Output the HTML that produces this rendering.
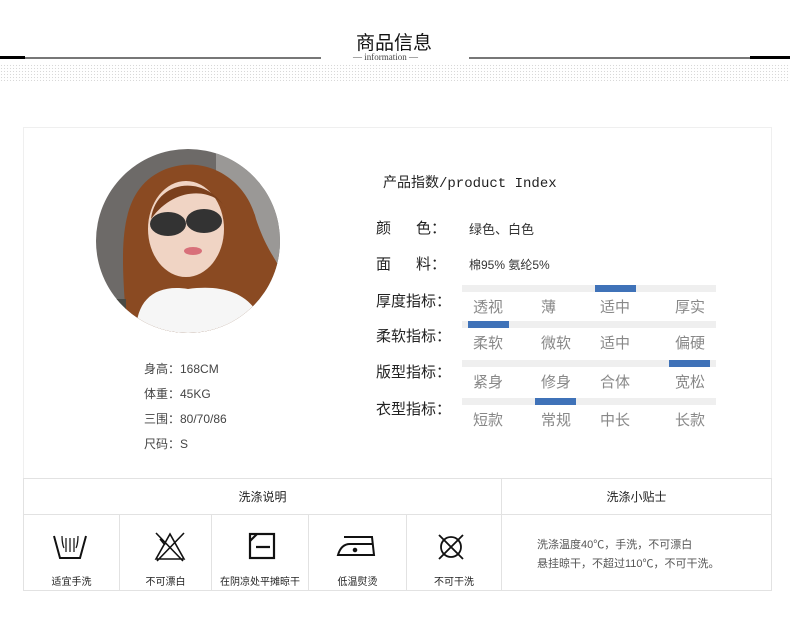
<!DOCTYPE html>
<html><head><meta charset="utf-8"><style>
*{margin:0;padding:0;box-sizing:border-box}
body{width:790px;height:631px;background:#fff;position:relative;overflow:hidden;font-family:"Liberation Sans","Noto Sans CJK SC",sans-serif;color:#333}
.a{position:absolute;white-space:nowrap}
.dots{position:absolute;left:0;top:64px;width:790px;height:17px;background-image:radial-gradient(#d8d8d8 0.6px,transparent 0.8px);background-size:3px 3px}
.track{position:absolute;left:462px;width:254px;height:7px;background:#efefef}
.blue{position:absolute;width:41px;height:7px;background:#3f72b8}
.lab{position:absolute;font-size:15px;color:#888}
.k{position:absolute;font-size:15px;color:#222;left:376px}
.cell{position:absolute;border:1px solid #e2e2e2}
.ic{position:absolute;font-size:10px;color:#222;text-align:center}
</style></head><body>
<div class="a" style="left:356px;top:28px;font-size:19px;color:#111">商品信息</div>
<div class="a" style="left:353px;top:52px;font-size:9px;color:#444;font-family:'Liberation Serif',serif">— information —</div>
<div class="a" style="left:0;top:56px;width:25px;height:3px;background:#000"></div>
<div class="a" style="left:25px;top:57px;width:296px;height:2px;background:#777"></div>
<div class="a" style="left:469px;top:57px;width:281px;height:2px;background:#777"></div>
<div class="a" style="left:750px;top:56px;width:40px;height:3px;background:#000"></div>
<div class="dots"></div>

<div class="a" style="left:23px;top:127px;width:749px;height:352px;border:1px solid #efefef"></div>

<svg class="a" style="left:96px;top:149px" width="184" height="184" viewBox="0 0 184 184">
<defs><clipPath id="c"><circle cx="92" cy="92" r="92"/></clipPath></defs>
<g clip-path="url(#c)">
<rect width="184" height="184" fill="#6d6a68"/>
<rect x="120" y="0" width="64" height="120" fill="#9a9896"/>
<path d="M30 170 C25 100 20 40 70 20 C110 5 150 30 160 70 C170 100 180 110 184 120 L184 184 L30 184Z" fill="#8a4a22"/>
<ellipse cx="90" cy="80" rx="38" ry="48" fill="#f0d4c4"/>
<path d="M55 70 C60 30 110 25 130 60 C120 40 80 35 55 70Z" fill="#7a3f1c"/>
<ellipse cx="72" cy="75" rx="18" ry="12" fill="#333"/>
<ellipse cx="108" cy="72" rx="18" ry="12" fill="#333"/>
<ellipse cx="97" cy="102" rx="9" ry="4" fill="#d8707a"/>
<path d="M40 184 C40 150 60 135 92 140 C130 135 160 145 170 184Z" fill="#f6f6f6"/>
<rect x="0" y="150" width="30" height="34" fill="#4a4a44"/>
</g></svg>

<div class="a" style="left:144px;top:357px;font-size:12px;color:#444;line-height:25px">身高：168CM<br>体重：45KG<br>三围：80/70/86<br>尺码：S</div>

<div class="a" style="left:383px;top:172px;font-size:14px;color:#222;font-family:'Liberation Mono','Noto Sans CJK SC',monospace">产品指数/product Index</div>
<div class="k" style="top:217px">颜&nbsp;&nbsp;&nbsp;&nbsp;&nbsp;&nbsp;色：</div>
<div class="a" style="left:469px;top:219px;font-size:13px;color:#333">绿色、白色</div>
<div class="k" style="top:253px">面&nbsp;&nbsp;&nbsp;&nbsp;&nbsp;&nbsp;料：</div>
<div class="a" style="left:469px;top:256px;font-size:12px;color:#333">棉95% 氨纶5%</div>

<div class="k" style="top:290px">厚度指标：</div>
<div class="track" style="top:285px"></div><div class="blue" style="left:595px;top:285px"></div>
<div class="lab" style="left:473px;top:296px">透视</div><div class="lab" style="left:541px;top:296px">薄</div><div class="lab" style="left:600px;top:296px">适中</div><div class="lab" style="left:675px;top:296px">厚实</div>

<div class="k" style="top:325px">柔软指标：</div>
<div class="track" style="top:321px"></div><div class="blue" style="left:468px;top:321px"></div>
<div class="lab" style="left:473px;top:332px">柔软</div><div class="lab" style="left:541px;top:332px">微软</div><div class="lab" style="left:600px;top:332px">适中</div><div class="lab" style="left:675px;top:332px">偏硬</div>

<div class="k" style="top:361px">版型指标：</div>
<div class="track" style="top:360px"></div><div class="blue" style="left:669px;top:360px"></div>
<div class="lab" style="left:473px;top:371px">紧身</div><div class="lab" style="left:541px;top:371px">修身</div><div class="lab" style="left:600px;top:371px">合体</div><div class="lab" style="left:675px;top:371px">宽松</div>

<div class="k" style="top:398px">衣型指标：</div>
<div class="track" style="top:398px"></div><div class="blue" style="left:535px;top:398px"></div>
<div class="lab" style="left:473px;top:409px">短款</div><div class="lab" style="left:541px;top:409px">常规</div><div class="lab" style="left:600px;top:409px">中长</div><div class="lab" style="left:675px;top:409px">长款</div>

<div class="cell" style="left:23px;top:478px;width:479px;height:37px"></div>
<div class="cell" style="left:501px;top:478px;width:271px;height:37px"></div>
<div class="a" style="left:23px;top:488px;width:479px;text-align:center;font-size:12px;color:#222">洗涤说明</div>
<div class="a" style="left:501px;top:488px;width:271px;text-align:center;font-size:12px;color:#222">洗涤小贴士</div>
<div class="cell" style="left:23px;top:514px;width:97px;height:77px"></div>
<div class="cell" style="left:119px;top:514px;width:93px;height:77px"></div>
<div class="cell" style="left:211px;top:514px;width:98px;height:77px"></div>
<div class="cell" style="left:308px;top:514px;width:99px;height:77px"></div>
<div class="cell" style="left:406px;top:514px;width:96px;height:77px"></div>
<div class="cell" style="left:501px;top:514px;width:271px;height:77px"></div>

<svg class="a" style="left:52px;top:532px" width="36" height="28" viewBox="0 0 36 28" fill="none" stroke="#111" stroke-width="2"><path d="M2 4 L8 26 L28 26 L34 4"/><path d="M10 4 C10 12 12 16 12 16 M14 6 V20 M18 6 V20 M22 6 V20 M26 4 C26 12 24 16 24 16" stroke-width="1.2"/></svg>
<svg class="a" style="left:153px;top:531px" width="34" height="32" viewBox="0 0 34 32" fill="none" stroke="#111" stroke-width="1.6"><path d="M17 3 L3 28 H31 Z M7 8 L12 14 M3 2 L30 30 M31 2 L4 30"/></svg>
<svg class="a" style="left:248px;top:532px" width="28" height="28" viewBox="0 0 28 28" fill="none" stroke="#111" stroke-width="2.2"><rect x="2" y="2" width="24" height="24"/><path d="M2 9 L9 2 M8 15 H22"/></svg>
<svg class="a" style="left:336px;top:534px" width="40" height="24" viewBox="0 0 40 24" fill="none" stroke="#111" stroke-width="2"><path d="M8 3 H36 L38 21 H2 C4 14 8 10 14 10 H36"/><circle cx="19" cy="16" r="1.3" fill="#111"/></svg>
<svg class="a" style="left:437px;top:533px" width="28" height="28" viewBox="0 0 28 28" fill="none" stroke="#111" stroke-width="1.8"><circle cx="14" cy="14" r="10"/><path d="M2 2 L26 26 M26 2 L2 26"/></svg>

<div class="ic" style="left:23px;top:573px;width:97px">适宜手洗</div>
<div class="ic" style="left:119px;top:573px;width:93px">不可漂白</div>
<div class="ic" style="left:211px;top:573px;width:98px">在阴凉处平摊晾干</div>
<div class="ic" style="left:308px;top:573px;width:99px">低温熨烫</div>
<div class="ic" style="left:406px;top:573px;width:96px">不可干洗</div>
<div class="a" style="left:537px;top:536px;font-size:11px;color:#555;line-height:19px">洗涤温度40℃，手洗，不可漂白<br>悬挂晾干，不超过110℃，不可干洗。</div>
</body></html>
